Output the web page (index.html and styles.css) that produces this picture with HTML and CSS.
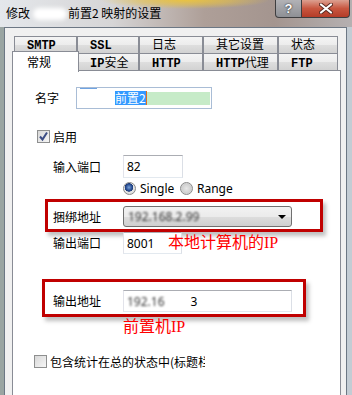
FILE: index.html
```html
<!DOCTYPE html>
<html lang="zh-CN">
<head>
    <meta charset="UTF-8">
    <title>映射的设置</title>
    <link rel="stylesheet" href="styles.css">
</head>
<body>
    <div class="window">
        <header class="titlebar">
            <div class="title">修改<span class="smear"></span>前置2 映射的设置</div>
            <div class="caption">
                <span class="cap-btn help">?</span>
                <span class="cap-btn close">
                    <svg width="14" height="11" viewBox="0 0 14 11">
                        <path d="M2 1.5 L12 9.5 M12 1.5 L2 9.5" stroke="#5a2a22" stroke-width="4" stroke-linecap="round"/>
                        <path d="M2 1.5 L12 9.5 M12 1.5 L2 9.5" stroke="#fff" stroke-width="2.2" stroke-linecap="round"/>
                    </svg>
                </span>
            </div>
        </header>

        <div class="client">
            <div class="tab-row">
                <span class="tab w1"><b class="lat">SMTP</b></span>
                <span class="tab w2"><b class="lat">SSL</b></span>
                <span class="tab w3">日志</span>
                <span class="tab w4">其它设置</span>
                <span class="tab w5">状态</span>
            </div>
            <div class="tab-row second">
                <span class="tab w1 active">常规</span>
                <span class="tab w2"><b class="lat">IP</b>安全</span>
                <span class="tab w3"><b class="lat">HTTP</b></span>
                <span class="tab w4"><b class="lat">HTTP</b>代理</span>
                <span class="tab w5"><b class="lat">FTP</b></span>
            </div>

            <div class="panel">
                <div class="name-row">
                    <span class="label short">名字</span>
                    <div class="name-box">
                        <span class="blank"></span>
                        <span class="sel">前置2</span>
                        <span class="caret"></span>
                        <span class="green"></span>
                    </div>
                </div>

                <div class="check-row enable">
                    <span class="checkbox">
                        <svg width="11" height="11" viewBox="0 0 11 11">
                            <path d="M2 5.5 L4.5 8.5 L9 1.5" fill="none" stroke="#3b4c84" stroke-width="2"/>
                        </svg>
                    </span>
                    <span>启用</span>
                </div>

                <div class="field in-port">
                    <span class="label">输入端口</span>
                    <span class="input port">82</span>
                </div>

                <div class="radio-row">
                    <span class="opt"><span class="radio on"></span>Single</span>
                    <span class="opt"><span class="radio"></span>Range</span>
                </div>

                <div class="mark mark-bind">
                    <span class="label">捆绑地址</span>
                    <div class="combo">
                        <span class="blur">192.168.2.99</span>
                        <span class="arrow"></span>
                    </div>
                </div>

                <div class="field out-port">
                    <span class="label">输出端口</span>
                    <span class="input port">8001</span>
                    <span class="note">本地计算机的IP</span>
                </div>

                <div class="mark mark-out">
                    <span class="label">输出地址</span>
                    <div class="input addr">
                        <span class="blur">192.16</span>
                        <span class="tail">3</span>
                    </div>
                </div>

                <div class="note below">前置机IP</div>

                <div class="check-row stats">
                    <span class="checkbox"></span>
                    <span class="clip">包含统计在总的状态中(标题栏</span>
                </div>
            </div>
        </div>
    </div>
</body>
</html>
```

FILE: styles.css
```css
body {
    margin: 0;
    width: 352px;
    height: 395px;
    overflow: hidden;
    font-family: "Noto Sans CJK SC", sans-serif;
    font-size: 12px;
    color: #000;
    background: linear-gradient(to right, #9aa5a2 0, #9aa5a2 4px, #c3ccd4 4px);
}
.window {
    display: flex;
    flex-direction: column;
    height: 395px;
}

/* title bar */
.titlebar {
    height: 27px;
    flex: none;
    display: flex;
    justify-content: space-between;
    align-items: flex-start;
    background:
        radial-gradient(ellipse 85px 9px at 185px 0, rgba(236, 196, 60, 0.95) 0%, rgba(236, 196, 60, 0.5) 55%, rgba(236, 196, 60, 0) 100%),
        linear-gradient(to right, #e4e7eb 0%, #d6d5d6 32%, #ae9f98 58%, #a4958f 78%, #b5b0b1 100%);
}
.title {
    padding: 6px 0 0 6px;
    line-height: 14px;
    font-size: 12px;
    white-space: nowrap;
}
.smear {
    display: inline-block;
    width: 34px;
    height: 12px;
    margin: 0 1px 0 3px;
    vertical-align: -2px;
    background: #fff;
    border-radius: 6px;
    filter: blur(2px);
}
.caption {
    display: flex;
    margin-right: 2px;
}
.cap-btn {
    box-sizing: border-box;
    height: 18px;
    display: flex;
    align-items: center;
    justify-content: center;
    border: 1px solid #3e3e40;
    border-top: none;
}
.help {
    width: 27px;
    border-radius: 0 0 0 4px;
    background: linear-gradient(#b2b2b6, #8e9095);
    color: #fff;
    font: bold 13px "Liberation Sans", sans-serif;
    text-shadow: 0 0 2px #333, 0 0 1px #333;
}
.close {
    width: 48px;
    border-left: none;
    border-radius: 0 0 4px 0;
    background: linear-gradient(#dca090, #c8563f 50%, #b43c28);
}

/* dialog client area */
.client {
    flex: 1;
    margin: 0 5px 0 4px;
    padding: 8px 5px 0 7px;
    border: 1px solid #6c7784;
    border-bottom: none;
    background: #f0f0f0;
    overflow: hidden;
}
.tab-row {
    display: flex;
    align-items: flex-start;
    margin-left: 2px;
}
.tab-row.second {
    margin-top: -1px;
    margin-bottom: -1px;
}
.tab {
    box-sizing: border-box;
    height: 18px;
    padding-left: 12px;
    border: 1px solid #898c95;
    background: linear-gradient(#f4f4f4, #ececec 50%, #dedede 51%, #d2d2d2);
    font-size: 12px;
    line-height: 14px;
    white-space: nowrap;
}
.second .tab {
    padding-top: 1px;
}
.lat {
    font-family: "Liberation Mono", monospace;
    font-weight: bold;
}
.w1 { width: 63px; }
.w2 { width: 62px; }
.w3 { width: 64px; }
.w4 { width: 75px; }
.w5 { width: 60px; }
.second .tab.active {
    position: relative;
    z-index: 2;
    width: 67px;
    height: 21px;
    margin: -2px -2px -1px -2px;
    padding: 3px 0 0 14px;
    border-bottom: none;
    background: #fff;
}

/* page content */
.panel {
    box-sizing: border-box;
    height: 340px;
    background: #fff;
    border: 1px solid #898c95;
    overflow: hidden;
}
.label {
    width: 70px;
    flex: none;
    line-height: 22px;
}
.label.short {
    width: 41px;
}
.name-row {
    display: flex;
    align-items: center;
    height: 22px;
    margin: 16px 0 0 22px;
}
.name-box {
    box-sizing: border-box;
    width: 136px;
    height: 22px;
    display: flex;
    align-items: center;
    border: 1px solid #a9bdd6;
}
.blank {
    width: 38px;
    height: 20px;
    background: linear-gradient(#6fa3e2, #6fa3e2) 3px 0 / 17px 1px no-repeat;
}
.sel {
    height: 14px;
    line-height: 14px;
    background: #3399ff;
    color: #fff;
}
.caret {
    width: 1px;
    height: 14px;
    background: #e07020;
}
.green {
    width: 63px;
    height: 13px;
    background: #c6ebc8;
}

.check-row {
    display: flex;
    align-items: center;
    gap: 3px;
    height: 13px;
}
.check-row.enable {
    margin: 21px 0 0 24px;
}
.check-row.stats {
    margin: 18px 0 0 21px;
}
.checkbox {
    box-sizing: border-box;
    width: 13px;
    height: 13px;
    flex: none;
    display: flex;
    align-items: center;
    justify-content: center;
    border: 1px solid #8e8f8f;
    background: linear-gradient(135deg, #d8d8d8, #f6f6f6);
}
.clip {
    width: 155px;
    overflow: hidden;
    white-space: nowrap;
    line-height: 16px;
}

.field {
    display: flex;
    align-items: center;
    padding-left: 40px;
}
.field.in-port {
    margin-top: 12px;
    height: 23px;
}
.field.out-port {
    height: 22px;
}
.input {
    box-sizing: border-box;
    display: flex;
    align-items: center;
    height: 22px;
    padding-left: 3px;
    border: 1px solid;
    border-color: #abadb3 #dbdfe6 #e3e9ef #e2e3ea;
    background: #fff;
    font-family: "Noto Sans", sans-serif;
    font-size: 12px;
}
.in-port .input {
    height: 23px;
}
.input.port {
    width: 60px;
}
.out-port .input.port {
    width: 59px;
}

.radio-row {
    display: flex;
    align-items: center;
    height: 13px;
    margin: 4px 0 0 110px;
    font-family: "Noto Sans", sans-serif;
    font-size: 12px;
}
.opt {
    display: flex;
    align-items: center;
    gap: 4px;
    width: 57px;
}
.radio {
    box-sizing: border-box;
    width: 13px;
    height: 13px;
    border-radius: 50%;
    border: 1px solid #8a8a8a;
    background: radial-gradient(circle at 50% 50%, #e8e8e8, #cfcfcf 60%, #f4f4f4);
}
.radio.on {
    background: radial-gradient(circle at 45% 40%, #7aa2d8 0, #2a4f94 3px, #1d3a78 4px, #e6e6e6 4.5px, #d0d0d0 100%);
}

/* red annotation boxes */
.mark {
    box-sizing: border-box;
    display: flex;
    align-items: flex-start;
    border: 3px solid #c00000;
    box-shadow: 3px 4px 4px rgba(0, 0, 0, 0.25);
}
.mark-bind {
    width: 278px;
    height: 33px;
    margin: 4px 0 0 32px;
    padding: 4px 0 0 5px;
}
.mark-bind .label {
    line-height: 21px;
}
.mark-out {
    width: 264px;
    height: 38px;
    margin: 25px 0 0 29px;
    padding: 8px 0 0 8px;
}
.combo {
    box-sizing: border-box;
    width: 169px;
    height: 21px;
    display: flex;
    align-items: center;
    justify-content: space-between;
    padding: 0 5px 0 4px;
    border: 1px solid #707070;
    border-radius: 3px;
    background: linear-gradient(#f2f2f2, #ebebeb 50%, #dddddd 51%, #cfcfcf);
    font-family: "Noto Sans", sans-serif;
}
.arrow {
    width: 0;
    height: 0;
    border-left: 4px solid transparent;
    border-right: 4px solid transparent;
    border-top: 4px solid #000;
}
.blur {
    filter: blur(1.3px);
    color: #333;
}
.input.addr {
    width: 169px;
}
.tail {
    margin-left: 26px;
}

.note {
    color: #ff0000;
    font-family: "Liberation Serif", "Noto Sans CJK SC", serif;
    font-size: 16px;
    white-space: nowrap;
}
.out-port .note {
    margin-left: -14px;
    line-height: 22px;
}
.note.below {
    margin-left: 110px;
    line-height: 20px;
}
```
